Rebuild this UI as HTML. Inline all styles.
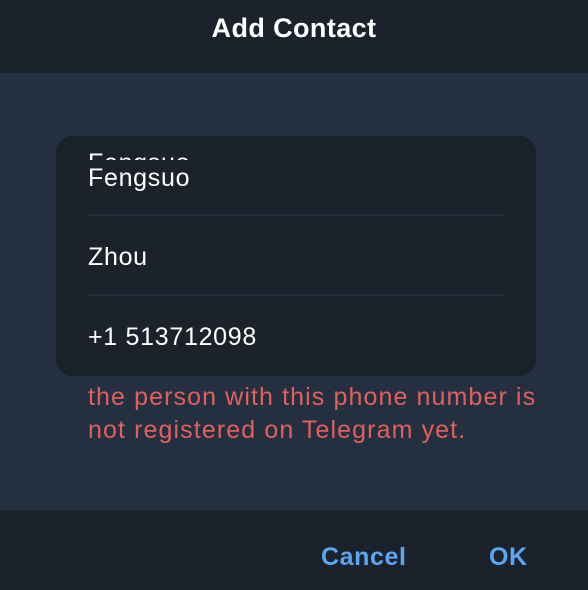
<!DOCTYPE html>
<html><head><style>
body{margin:0;width:588px;height:590px;background:#243040;font-family:"Liberation Sans",sans-serif;position:relative;overflow:hidden}
.hdr{position:absolute;left:0;top:0;width:588px;height:73px;background:#1c222b;color:#fff;font-weight:bold;font-size:27px;text-align:center;line-height:56px;letter-spacing:0.4px}
.ftr{position:absolute;left:0;top:510px;width:588px;height:80px;background:#1c222b}
.btn{position:absolute;top:543px;color:#5aa6f0;font-weight:bold;font-size:25px;letter-spacing:0.6px}
.card{position:absolute;left:56px;top:136px;width:480px;height:240px;background:#1c222b;border-radius:16px;overflow:hidden}
.t{position:absolute;left:32px;color:#fff;font-size:25px;line-height:30px;letter-spacing:0.7px}
.ln{position:absolute;left:32px;width:416px;height:2px;background:#263140}
.err{position:absolute;left:88px;top:381px;color:#e0605e;font-size:25px;line-height:33px;letter-spacing:1.1px;white-space:nowrap}
.clip{position:absolute;left:0;top:0;width:480px;height:24px;overflow:hidden}
</style></head><body>
<div class="hdr">Add Contact</div>
<div class="card">
<div class="clip"><div class="t" style="top:12px">Fengsuo</div></div>
<div class="t" style="top:27px">Fengsuo</div>
<div class="ln" style="top:78px"></div>
<div class="t" style="top:106px">Zhou</div>
<div class="ln" style="top:158px"></div>
<div class="t" style="top:186px">+1 513712098</div>
</div>
<div class="err">the person with this phone number is<br>not registered on Telegram yet.</div>
<div class="ftr"></div>
<div class="btn" style="left:321px">Cancel</div>
<div class="btn" style="left:489px">OK</div>
</body></html>
